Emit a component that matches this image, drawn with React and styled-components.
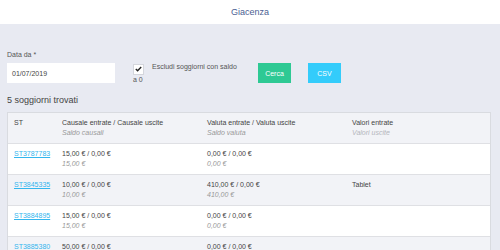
import styled, { createGlobalStyle } from 'styled-components';

const GlobalStyle = createGlobalStyle`
  body {
    margin: 0;
    background: #e8eaf2;
    font-family: 'Liberation Sans', Arial, sans-serif;
    color: #444;
  }
`;

const TopBar = styled.header`
  height: 24px;
  background: #fff;
  display: flex;
  align-items: center;
  justify-content: center;
  font-size: 9px;
  color: #4b5e92;
`;

const Main = styled.main`
  padding: 23px 9px 0 7px;
`;

const Form = styled.div`
  display: flex;
  align-items: flex-start;
`;

const Field = styled.div`
  display: flex;
  flex-direction: column;
`;

const Label = styled.label`
  font-size: 7px;
  line-height: 9px;
  color: #555;
  margin-bottom: 4px;
  margin-top: 3px;
`;

const Input = styled.div`
  width: 108px;
  height: 20px;
  background: #fff;
  box-sizing: border-box;
  padding-left: 5px;
  display: flex;
  align-items: center;
  font-size: 7px;
  color: #444;
`;

const CheckGroup = styled.div`
  width: 108px;
  margin-left: 18px;
  margin-top: 15px;
  font-size: 7px;
  line-height: 10px;
  color: #555;
`;

const Box = styled.span`
  display: inline-flex;
  align-items: center;
  justify-content: center;
  width: 11px;
  height: 11px;
  box-sizing: border-box;
  background: #fff;
  border: 1px solid #d4d6dc;
  margin-right: 8px;
  vertical-align: -3px;
`;

const Button = styled.button`
  width: 33px;
  height: 20px;
  margin-top: 16px;
  margin-left: ${({ $gap }) => $gap}px;
  border: 1px solid ${({ $bg }) => $bg};
  background: ${({ $bg }) => $bg};
  color: #fff;
  font-family: inherit;
  font-size: 7px;
  padding: 0;
`;

const Title = styled.div`
  font-size: 9px;
  margin-top: 10px;
  height: 17px;
  color: #444;
`;

const Table = styled.div`
  border: 1px solid #d9dbe0;
  border-bottom: none;
  background: #fff;
`;

const Row = styled.div`
  display: grid;
  grid-template-columns: 48px 145px 145px 1fr;
  height: 30px;
  border-bottom: 1px solid #dfe0e4;
  background: ${({ $alt }) => ($alt ? '#f2f3f7' : '#fff')};
  font-size: 7px;
  line-height: 10px;
  color: #444;
`;

const Cell = styled.div`
  padding: 5px 0 0 6px;
`;

const Sub = styled.div`
  font-style: italic;
  color: ${({ $light }) => ($light ? '#b4b6bc' : '#999')};
`;

const Link = styled.a`
  color: #33b6ee;
  text-decoration: underline;
`;

const rows = [
  { id: 'ST3787783', c: '15,00 € / 0,00 €', cs: '15,00 €', v: '0,00 € / 0,00 €', vs: '0,00 €', val: '' },
  { id: 'ST3845335', c: '10,00 € / 0,00 €', cs: '10,00 €', v: '410,00 € / 0,00 €', vs: '410,00 €', val: 'Tablet' },
  { id: 'ST3884895', c: '15,00 € / 0,00 €', cs: '15,00 €', v: '0,00 € / 0,00 €', vs: '0,00 €', val: '' },
  { id: 'ST3885380', c: '50,00 € / 0,00 €', cs: '50,00 €', v: '0,00 € / 0,00 €', vs: '0,00 €', val: '' },
];

const App = () => {
  return (
    <>
      <GlobalStyle />
      <TopBar>Giacenza</TopBar>
      <Main>
        <Form>
          <Field>
            <Label>Data da *</Label>
            <Input>01/07/2019</Input>
          </Field>
          <CheckGroup>
            <Box>
              <svg width="7" height="6" viewBox="0 0 7 6">
                <path d="M0.8 3.1 L2.6 4.8 L6.2 1" fill="none" stroke="#222" strokeWidth="1.4" />
              </svg>
            </Box>
            Escludi soggiorni con saldo a 0
          </CheckGroup>
          <Button $bg="#2ec994" $gap={17}>Cerca</Button>
          <Button $bg="#33ccfb" $gap={17}>CSV</Button>
        </Form>
        <Title>5 soggiorni trovati</Title>
        <Table>
          <Row $alt>
            <Cell>ST</Cell>
            <Cell>
              Causale entrate / Causale uscite
              <Sub>Saldo causali</Sub>
            </Cell>
            <Cell>
              Valuta entrate / Valuta uscite
              <Sub>Saldo valuta</Sub>
            </Cell>
            <Cell>
              Valori entrate
              <Sub $light>Valori uscite</Sub>
            </Cell>
          </Row>
          {rows.map((r, i) => (
            <Row key={r.id} $alt={i % 2 === 1}>
              <Cell>
                <Link href="#">{r.id}</Link>
              </Cell>
              <Cell>
                {r.c}
                <Sub>{r.cs}</Sub>
              </Cell>
              <Cell>
                {r.v}
                <Sub>{r.vs}</Sub>
              </Cell>
              <Cell>{r.val}</Cell>
            </Row>
          ))}
        </Table>
      </Main>
    </>
  );
};

export default App;
